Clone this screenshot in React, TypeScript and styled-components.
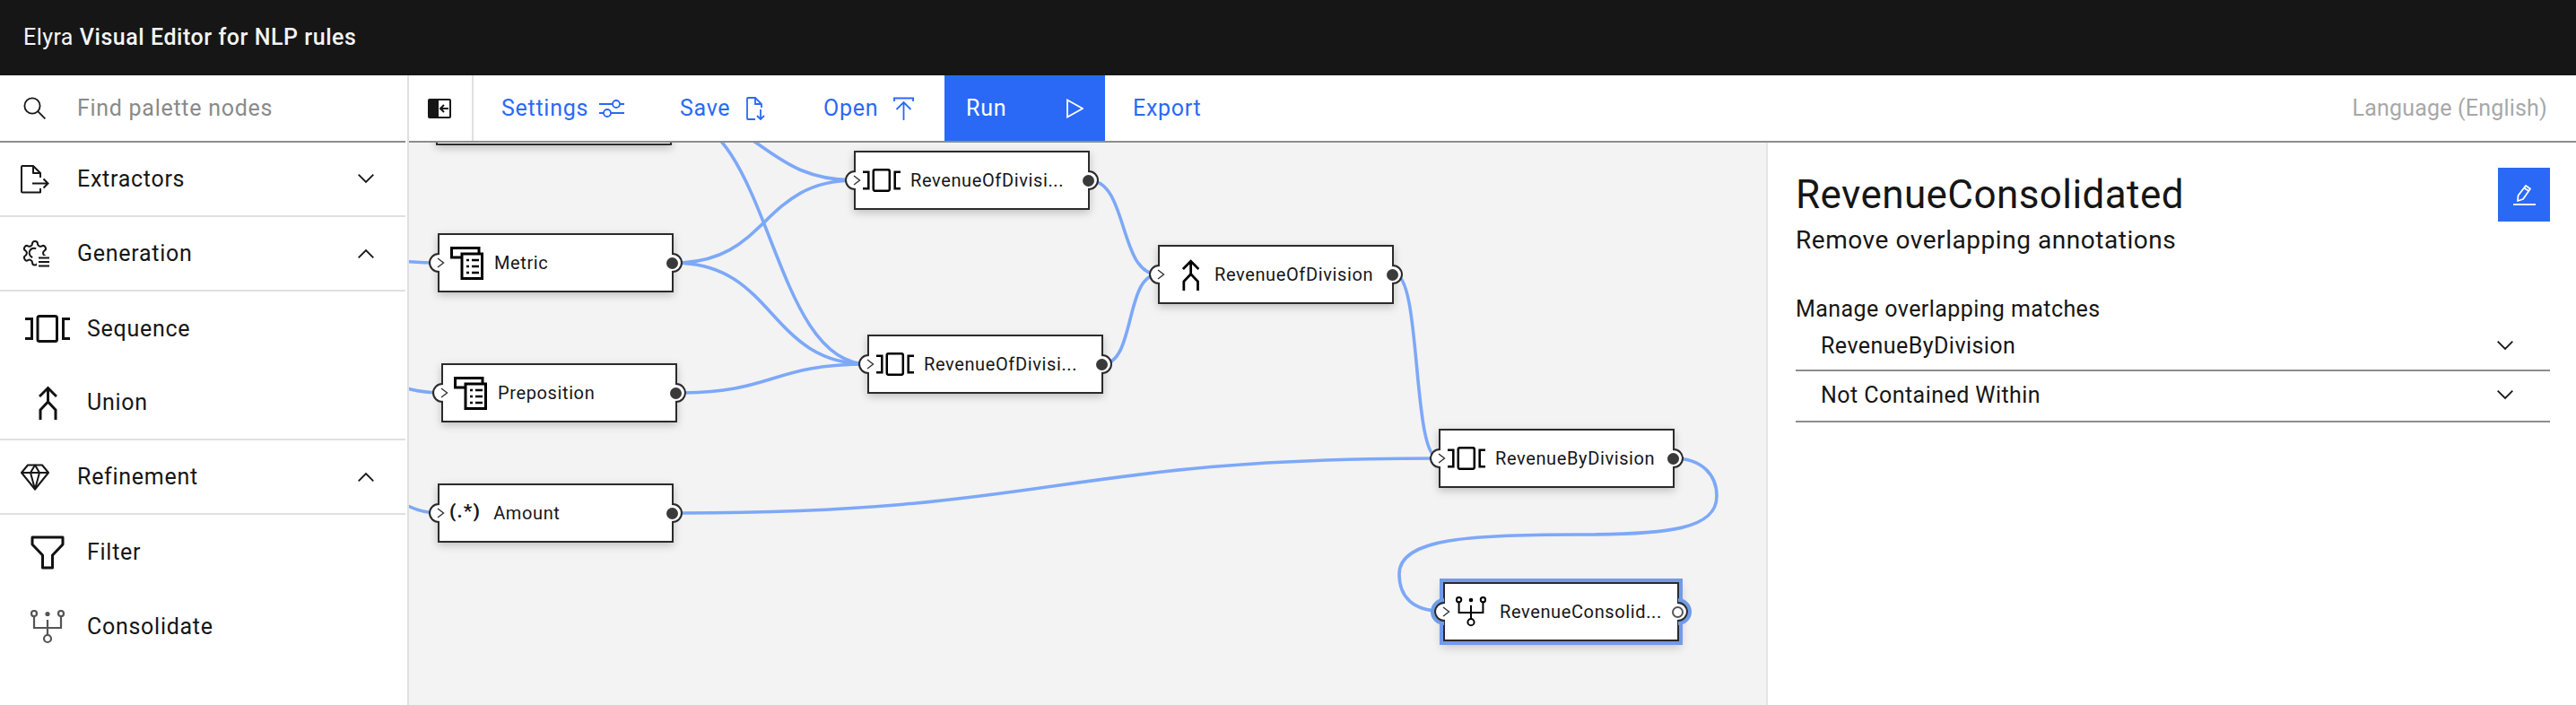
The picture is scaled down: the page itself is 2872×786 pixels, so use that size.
import React from 'react';
import styled, { createGlobalStyle } from 'styled-components';

const blue = '#2a69f6';
const edgeBlue = '#7da8f8';
const nodeFont = `Roboto, "Noto Sans", sans-serif`;

const GlobalStyle = createGlobalStyle`
  html, body {
    margin: 0;
    padding: 0;
    background: #fff;
    font-family: ${nodeFont};
    color: #161616;
  }
  * { box-sizing: border-box; }
`;

const Page = styled.div`
  display: flex;
  flex-direction: column;
  width: 2872px;
  height: 786px;
  overflow: hidden;
`;

const Header = styled.header`
  height: 84px;
  flex: none;
  display: flex;
  align-items: center;
  padding: 0 26px 2px;
  background: #161616;
  color: #f4f4f4;
  font-size: 25px;
  letter-spacing: 0.42px;

  b {
    font-weight: 500;
    margin-left: 7px;
    letter-spacing: 0.55px;
  }
`;

const Main = styled.div`
  flex: 1;
  display: flex;
  min-height: 0;
`;

const Sidebar = styled.aside`
  width: 456px;
  flex: none;
  padding-right: 2px;
  border-right: 2px solid #e0e0e0;
`;

const Search = styled.div`
  height: 75px;
  display: flex;
  align-items: center;
  padding-left: 26px;
  border-bottom: 2px solid #8d8d8d;
  font-size: 25px;
  letter-spacing: 0.72px;
  color: #8a8a8a;

  svg { margin-right: 35px; }
`;

const CategoryRow = styled.div`
  height: 83px;
  display: flex;
  align-items: center;
  padding: 0 35px 0 23px;
  border-bottom: 2px solid #e0e0e0;
  font-size: 25px;
  letter-spacing: 0.72px;
`;

const CategoryIcon = styled.span`
  width: 63px;
  display: flex;
  align-items: center;
`;

const CategoryName = styled.span`
  flex: 1;
`;

const PaletteRow = styled.div<{ $ruled?: boolean }>`
  height: 83px;
  display: flex;
  align-items: center;
  padding-left: 28px;
  font-size: 25px;
  letter-spacing: 0.72px;
  border-bottom: ${(p) => (p.$ruled ? '2px solid #e0e0e0' : 'none')};
`;

const PaletteIcon = styled.span<{ $muted?: boolean }>`
  width: 50px;
  margin-right: 19px;
  display: flex;
  justify-content: center;
  color: ${(p) => (p.$muted ? '#555' : '#111')};
`;

const Workspace = styled.div`
  flex: 1;
  display: flex;
  flex-direction: column;
  min-width: 0;
`;

const Toolbar = styled.nav`
  height: 75px;
  flex: none;
  display: flex;
  align-items: stretch;
  border-bottom: 2px solid #8d8d8d;
  font-size: 25px;
  letter-spacing: 0.72px;
`;

const CollapseButton = styled.div`
  width: 72px;
  display: flex;
  align-items: center;
  justify-content: center;
  padding-right: 2px;
  border-right: 2px solid #e0e0e0;
`;

const ToolButton = styled.div<{ $width: number; $inset: number; $primary?: boolean }>`
  width: ${(p) => p.$width}px;
  padding: 0 ${(p) => p.$inset}px;
  display: flex;
  align-items: center;
  justify-content: space-between;
  color: ${(p) => (p.$primary ? '#fff' : blue)};
  background: ${(p) => (p.$primary ? blue : 'transparent')};
`;

const Language = styled.div`
  margin-left: auto;
  padding-right: 32px;
  display: flex;
  align-items: center;
  color: #a8a8a8;
  letter-spacing: 0.2px;
`;

const Content = styled.div`
  flex: 1;
  display: flex;
  min-height: 0;
`;

const Canvas = styled.div`
  position: relative;
  width: 1515px;
  flex: none;
  overflow: hidden;
  background: #f3f3f3;
  border-right: 2px solid #e4e4e4;
`;

const Edges = styled.svg`
  position: absolute;
  left: 0;
  top: 0;

  path {
    fill: none;
    stroke: ${edgeBlue};
    stroke-width: 3.6;
  }
`;

const Node = styled.div<{ $x: number; $y: number; $selected?: boolean }>`
  position: absolute;
  left: ${(p) => p.$x}px;
  top: ${(p) => p.$y}px;
  width: 263px;
  height: 66px;
  display: flex;
  align-items: center;
  background: #fff;
  border: 2px solid #2b2b2b;
  box-shadow: ${(p) =>
    p.$selected
      ? `0 0 0 4px #6f9bea, 0 5px 10px 2px rgba(0, 0, 0, 0.18)`
      : '0 3px 9px rgba(0, 0, 0, 0.22)'};
`;

const NodeIcon = styled.span<{ $left: number; $width: number; $gap: number }>`
  margin: 0 ${(p) => p.$gap}px 0 ${(p) => p.$left}px;
  width: ${(p) => p.$width}px;
  flex: none;
  display: flex;
  justify-content: center;
  color: #000;
`;

const RegexIcon = styled.span`
  margin: -5px 14px 0 11px;
  font-size: 21px;
  font-weight: 700;
  letter-spacing: 1.2px;
  white-space: nowrap;
`;

const NodeLabel = styled.span`
  font-size: 20px;
  font-weight: 400;
  letter-spacing: 0.62px;
  white-space: nowrap;
  color: #161616;
`;

// the white disc breaks the node border; the ring is only drawn outside the node
const InPort = styled.span<{ $selected?: boolean }>`
  position: absolute;
  left: -10px;
  top: 50%;
  width: 18px;
  height: 18px;
  margin-top: -9px;
  display: flex;
  align-items: center;
  justify-content: center;
  background: #fff;
  border-radius: 50%;

  &::before {
    content: '';
    position: absolute;
    inset: -2px;
    border: 2px solid #2b2b2b;
    border-radius: 50%;
    box-shadow: ${(p) => (p.$selected ? '0 0 0 4px #6f9bea' : 'none')};
    clip-path: inset(-6px 11px -6px -6px);
  }
`;

const OutPort = styled.span<{ $selected?: boolean }>`
  position: absolute;
  right: -10px;
  top: 50%;
  width: 18px;
  height: 18px;
  margin-top: -9px;
  background: #fff;
  border-radius: 50%;

  &::before {
    content: '';
    position: absolute;
    inset: -2px;
    border: 2px solid #2b2b2b;
    border-radius: 50%;
    box-shadow: ${(p) => (p.$selected ? '0 0 0 4px #6f9bea' : 'none')};
    clip-path: inset(-6px -6px -6px 11px);
  }
`;

const PortDot = styled.span<{ $selected?: boolean }>`
  position: absolute;
  right: -7px;
  top: 50%;
  width: 13px;
  height: 13px;
  margin-top: -6.5px;
  border-radius: 50%;
  background: ${(p) => (p.$selected ? '#fff' : '#3a3a3a')};
  border: ${(p) => (p.$selected ? '2px solid #555' : 'none')};
`;

const Panel = styled.section`
  flex: 1;
  min-width: 0;
  padding: 28px 29px 0 31px;
`;

const PanelHead = styled.div`
  display: flex;
  justify-content: space-between;
  align-items: flex-start;
`;

const PanelTitle = styled.h1`
  margin: 2px 0 0;
  font-size: 44px;
  line-height: 56px;
  font-weight: 400;
  letter-spacing: 0.42px;
`;

const EditButton = styled.div`
  width: 58px;
  height: 60px;
  display: flex;
  align-items: center;
  justify-content: center;
  background: ${blue};
`;

const PanelSubtitle = styled.p`
  margin: 3px 0 0;
  font-size: 28px;
  line-height: 36px;
  letter-spacing: 0.55px;
`;

const FieldLabel = styled.div`
  margin-top: 43px;
  font-size: 25px;
  line-height: 32px;
  letter-spacing: 0.42px;
`;

const Dropdown = styled.div`
  height: 57px;
  display: flex;
  align-items: center;
  justify-content: space-between;
  padding: 0 41px 2px 28px;
  border-bottom: 2px solid #8d8d8d;
  font-size: 25px;
  letter-spacing: 0.45px;
`;

const FirstDropdown = styled(Dropdown)`
  height: 53px;
`;

type IconProps = { size?: number };

const Chevron = ({ up }: { up?: boolean }) => (
  <svg width="18" height="11" viewBox="0 0 18 11" fill="none" stroke="#161616" strokeWidth="1.8">
    <path d={up ? 'M0.7 10.3 L9 2 L17.3 10.3' : 'M0.7 0.7 L9 9 L17.3 0.7'} />
  </svg>
);

const SearchIcon = () => (
  <svg width="25" height="25" viewBox="0 0 25 25" fill="none" stroke="#161616" strokeWidth="1.8">
    <circle cx="10" cy="10" r="8.6" />
    <path d="M16.2 16.2 L24.4 24.4" />
  </svg>
);

const ExportDocIcon = () => (
  <svg width="32" height="32" viewBox="0 0 32 32" fill="none" stroke="#161616" strokeWidth="2">
    <path d="M22 14 V9 L14 1 H2 a1 1 0 0 0 -1 1 V29.5 a1 1 0 0 0 1 1 H22 V26 M14 1 V9 H22" strokeLinejoin="round" />
    <path d="M13 20.5 H30.5 M25.5 15.5 L30.5 20.5 L25.5 25.5" />
  </svg>
);

const GearIcon = () => (
  <svg width="33" height="33" viewBox="0 0 33 33" fill="none" stroke="#161616">
    <g transform="scale(1.33) translate(0 0.2)" strokeWidth="1.5">
      <path d="M12.22 2h-.44a2 2 0 0 0-2 2v.18a2 2 0 0 1-1 1.73l-.43.25a2 2 0 0 1-2 0l-.15-.08a2 2 0 0 0-2.73.73l-.22.38a2 2 0 0 0 .73 2.73l.15.1a2 2 0 0 1 1 1.72v.51a2 2 0 0 1-1 1.74l-.15.09a2 2 0 0 0-.73 2.73l.22.38a2 2 0 0 0 2.73.73l.15-.08a2 2 0 0 1 2 0l.43.25a2 2 0 0 1 1 1.73V20a2 2 0 0 0 2 2h.44a2 2 0 0 0 2-2v-.18a2 2 0 0 1 1-1.73l.43-.25a2 2 0 0 1 2 0l.15.08a2 2 0 0 0 2.73-.73l.22-.39a2 2 0 0 0-.73-2.73l-.15-.08a2 2 0 0 1-1-1.74v-.5a2 2 0 0 1 1-1.74l.15-.09a2 2 0 0 0 .73-2.73l-.22-.38a2 2 0 0 0-2.73-.73l-.15.08a2 2 0 0 1-2 0l-.43-.25a2 2 0 0 1-1-1.73V4a2 2 0 0 0-2-2z" />
      <path d="M13 8.2 A4 4 0 1 0 10 15.6" />
    </g>
    <rect x="18" y="19" width="15" height="14" fill="#fff" stroke="none" />
    <path d="M20 21.5 H32 M20 26 H32 M20 30.5 H32" strokeWidth="2" />
  </svg>
);

const DiamondIcon = () => (
  <svg width="32" height="30" viewBox="0 0 32 30" fill="none" stroke="#161616" strokeWidth="2" strokeLinejoin="round">
    <path d="M8 1.5 H24 L31 10 L16 28.5 L1 10 Z" />
    <path d="M1 10 H31 M11 10 L16 1.5 L21 10 L16 28.5 L11 10" />
  </svg>
);

const SequenceIcon = ({ size = 50 }: IconProps) => (
  <svg width={size} height={(size * 31) / 50} viewBox="0 0 50 31" fill="none" stroke="currentColor" strokeWidth="3">
    <path d="M0 4.5 H7.5 V26.5 H0" />
    <rect x="14" y="1.5" width="21.5" height="28" rx="2" />
    <path d="M50 4.5 H42.5 V26.5 H50" />
  </svg>
);

const UnionIcon = ({ height = 38 }: { height?: number }) => (
  <svg width={(height * 21) / 38} height={height} viewBox="0 0 21 38" fill="none" stroke="currentColor" strokeWidth="3">
    <path d="M1 12 L10.5 2.5 L20 12 M10.5 2.5 V19" />
    <path d="M2 38 V27 L10.5 18 L19 27 V38" />
  </svg>
);

const FilterIcon = () => (
  <svg width="38" height="38" viewBox="0 0 38 38" fill="none" stroke="#111" strokeWidth="3" strokeLinejoin="round">
    <path d="M2 2 H36 V10 L24.5 22 V36 H13.5 V22 L2 10 Z" />
  </svg>
);

const ConsolidateIcon = ({ size = 38 }: IconProps) => (
  <svg width={size} height={size} viewBox="0 0 38 38" fill="none" stroke="currentColor" strokeWidth="2.2">
    <circle cx="4" cy="4" r="3" />
    <circle cx="34" cy="4" r="3" />
    <circle cx="19" cy="4.5" r="2.6" fill="currentColor" stroke="none" />
    <circle cx="19" cy="32" r="4" />
    <path d="M4 7 V20 H34 V7 M19 11 V28" />
  </svg>
);

const DictionaryIcon = () => (
  <svg width="37" height="37" viewBox="0 0 37 37" fill="none" stroke="#000" strokeWidth="3">
    <path d="M13 12 H1.5 V1.5 H32 V8" />
    <rect x="13" y="8" width="22.5" height="27.5" fill="#fff" />
    <path d="M18 15 H21 M24 15 H32 M18 22 H21 M24 22 H32 M18 29 H21 M24 29 H32" strokeWidth="2.4" />
  </svg>
);

const CollapseIcon = () => (
  <svg width="26" height="22" viewBox="0 0 26 22">
    <rect x="0" y="0" width="26" height="22" rx="2" fill="#161616" />
    <rect x="12" y="2" width="12" height="18" fill="#fff" />
    <path d="M23 11 H14 M18 7 L14 11 L18 15" fill="none" stroke="#161616" strokeWidth="2" />
  </svg>
);

const SlidersIcon = () => (
  <svg width="28" height="22" viewBox="0 0 28 22" fill="none" stroke={blue} strokeWidth="1.8">
    <path d="M0 6 H15 M23 6 H28 M0 16 H5 M13 16 H28" />
    <circle cx="19" cy="6" r="4" />
    <circle cx="9" cy="16" r="4" />
  </svg>
);

const SaveIcon = () => (
  <svg width="21" height="26" viewBox="0 0 21 26" fill="none" stroke={blue} strokeWidth="1.8">
    <path d="M10 25 H2 a1 1 0 0 1 -1 -1 V2 a1 1 0 0 1 1 -1 H10 L17 8 V12 M10 1 V8 H17" />
    <path d="M16 14 V25 M12 21 L16 25 L20 21" />
  </svg>
);

const UploadIcon = () => (
  <svg width="23" height="26" viewBox="0 0 23 26" fill="none" stroke={blue} strokeWidth="1.8">
    <path d="M0 1.5 H23 M1 1.5 V5 M22 1.5 V5 M11.5 26 V6 M3.5 14 L11.5 6 L19.5 14" />
  </svg>
);

const PlayIcon = () => (
  <svg width="19" height="22" viewBox="0 0 19 22" fill="none" stroke="#fff" strokeWidth="1.8">
    <path d="M1 1.5 L18 11 L1 20.5 Z" />
  </svg>
);

const PencilIcon = () => (
  <svg width="25" height="24" viewBox="0 0 25 24" fill="none" stroke="#fff" strokeWidth="1.8">
    <path d="M0 23 H25" />
    <path d="M5 19 L5.5 13 L14 2 L19 5.5 L11 17 Z M12 4.5 L17.5 8" strokeLinejoin="round" />
  </svg>
);

const PortArrowSvg = styled.svg`
  position: relative;
  margin-left: 5px;
`;

const PortArrow = () => (
  <PortArrowSvg width="9" height="12" viewBox="0 0 9 12" fill="none" stroke="#333" strokeWidth="1.4">
    <path d="M1 1 L7.5 6 L1 11" />
  </PortArrowSvg>
);

// page coordinates: canvas starts at 456,159
const originX = 456;
const originY = 159;

const edges = [
  'M300 280 C400 280 420 293 488 293',
  'M300 400 C400 400 430 438 492 438',
  'M300 500 C400 500 430 572 488 572',
  'M750 129 C850 129 853 201 953 201',
  'M750 129 C860 129 858 406 968 406',
  'M752 293 C858 293 848 201 953 201',
  'M752 293 C865 293 856 406 968 406',
  'M755 438 C865 438 858 406 968 406',
  'M751 572 C1180 572 1175 511 1604 511',
  'M1214 201 C1258 201 1247 306 1291 306',
  'M1229 406 C1266 406 1254 306 1291 306',
  'M1555 306 C1585 306 1574 511 1604 511',
  'M1866 511 C1898 511 1914 530 1914 553 C1914 590 1860 596 1760 596 C1640 596 1560 600 1560 640 C1560 665 1575 681 1606 681',
];

type NodeInfo = {
  x: number;
  y: number;
  label?: string;
  icon?: 'dict' | 'seq' | 'union' | 'regex' | 'consolidate';
  selected?: boolean;
};

const nodes: NodeInfo[] = [
  { x: 486, y: 96 },
  { x: 488, y: 260, label: 'Metric', icon: 'dict' },
  { x: 492, y: 405, label: 'Preposition', icon: 'dict' },
  { x: 488, y: 539, label: 'Amount', icon: 'regex' },
  { x: 952, y: 168, label: 'RevenueOfDivisi...', icon: 'seq' },
  { x: 967, y: 373, label: 'RevenueOfDivisi...', icon: 'seq' },
  { x: 1291, y: 273, label: 'RevenueOfDivision', icon: 'union' },
  { x: 1604, y: 478, label: 'RevenueByDivision', icon: 'seq' },
  { x: 1609, y: 649, label: 'RevenueConsolid...', icon: 'consolidate', selected: true },
];

const renderNodeIcon = (icon: NodeInfo['icon']) => {
  switch (icon) {
    case 'dict':
      return <NodeIcon $left={12} $width={37} $gap={12}><DictionaryIcon /></NodeIcon>;
    case 'seq':
      return <NodeIcon $left={8} $width={42} $gap={11}><SequenceIcon size={42} /></NodeIcon>;
    case 'union':
      return <NodeIcon $left={24} $width={21} $gap={16}><UnionIcon height={35} /></NodeIcon>;
    case 'consolidate':
      return <NodeIcon $left={12} $width={34} $gap={15}><ConsolidateIcon size={34} /></NodeIcon>;
    case 'regex':
      return <RegexIcon>(.*)</RegexIcon>;
    default:
      return null;
  }
};

const App = () => (
  <Page>
    <GlobalStyle />
    <Header>
      Elyra <b>Visual Editor for NLP rules</b>
    </Header>
    <Main>
      <Sidebar>
        <Search>
          <SearchIcon />
          Find palette nodes
        </Search>
        <CategoryRow>
          <CategoryIcon><ExportDocIcon /></CategoryIcon>
          <CategoryName>Extractors</CategoryName>
          <Chevron />
        </CategoryRow>
        <CategoryRow>
          <CategoryIcon><GearIcon /></CategoryIcon>
          <CategoryName>Generation</CategoryName>
          <Chevron up />
        </CategoryRow>
        <PaletteRow>
          <PaletteIcon><SequenceIcon /></PaletteIcon>
          Sequence
        </PaletteRow>
        <PaletteRow $ruled>
          <PaletteIcon><UnionIcon /></PaletteIcon>
          Union
        </PaletteRow>
        <CategoryRow>
          <CategoryIcon><DiamondIcon /></CategoryIcon>
          <CategoryName>Refinement</CategoryName>
          <Chevron up />
        </CategoryRow>
        <PaletteRow>
          <PaletteIcon><FilterIcon /></PaletteIcon>
          Filter
        </PaletteRow>
        <PaletteRow>
          <PaletteIcon $muted><ConsolidateIcon /></PaletteIcon>
          Consolidate
        </PaletteRow>
      </Sidebar>
      <Workspace>
        <Toolbar>
          <CollapseButton><CollapseIcon /></CollapseButton>
          <ToolButton $width={199} $inset={31}>Settings <SlidersIcon /></ToolButton>
          <ToolButton $width={157} $inset={31}>Save <SaveIcon /></ToolButton>
          <ToolButton $width={169} $inset={34}>Open <UploadIcon /></ToolButton>
          <ToolButton $width={179} $inset={24} $primary>Run <PlayIcon /></ToolButton>
          <ToolButton $width={140} $inset={31}>Export</ToolButton>
          <Language>Language (English)</Language>
        </Toolbar>
        <Content>
          <Canvas>
            <Edges width="1515" height="627" viewBox={`${originX} ${originY} 1515 627`}>
              {edges.map((d) => <path key={d} d={d} />)}
            </Edges>
            {nodes.map((n) => (
              <Node key={`${n.x}-${n.y}`} $x={n.x - originX} $y={n.y - originY} $selected={n.selected}>
                <InPort $selected={n.selected}><PortArrow /></InPort>
                {renderNodeIcon(n.icon)}
                {n.label && <NodeLabel>{n.label}</NodeLabel>}
                <OutPort $selected={n.selected} />
                <PortDot $selected={n.selected} />
              </Node>
            ))}
          </Canvas>
          <Panel>
            <PanelHead>
              <PanelTitle>RevenueConsolidated</PanelTitle>
              <EditButton><PencilIcon /></EditButton>
            </PanelHead>
            <PanelSubtitle>Remove overlapping annotations</PanelSubtitle>
            <FieldLabel>Manage overlapping matches</FieldLabel>
            <FirstDropdown>RevenueByDivision <Chevron /></FirstDropdown>
            <Dropdown>Not Contained Within <Chevron /></Dropdown>
          </Panel>
        </Content>
      </Workspace>
    </Main>
  </Page>
);

export default App;
